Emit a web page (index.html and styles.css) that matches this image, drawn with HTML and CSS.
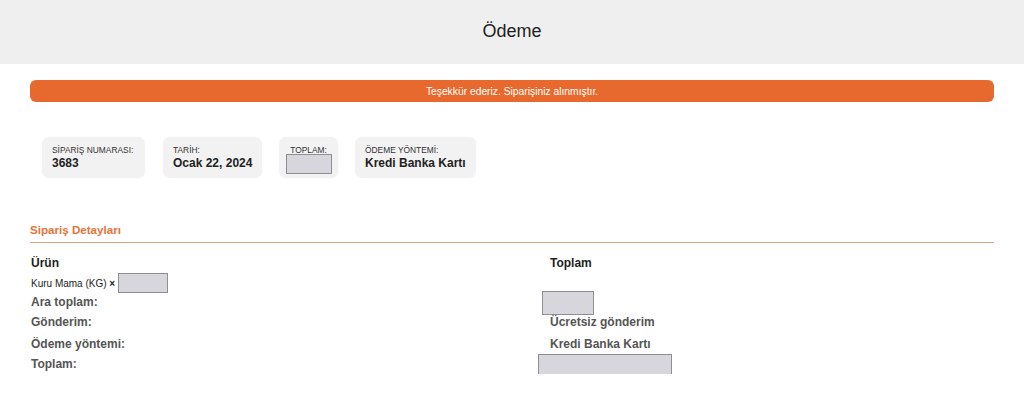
FILE: index.html
```html
<!DOCTYPE html>
<html lang="tr">
<head>
<meta charset="utf-8">
<title>Ödeme</title>
<link rel="stylesheet" href="styles.css">
</head>
<body>
<header class="page-header">
  <h1 class="page-title">Ödeme</h1>
</header>
<main class="content">
  <div class="notice">Teşekkür ederiz. Siparişiniz alınmıştır.</div>

  <ul class="overview">
    <li class="card">
      <span class="card-label">SİPARİŞ NUMARASI:</span>
      <strong class="card-value">3683</strong>
    </li>
    <li class="card">
      <span class="card-label">TARİH:</span>
      <strong class="card-value">Ocak 22, 2024</strong>
    </li>
    <li class="card card-center">
      <span class="card-label">TOPLAM:</span>
      <span class="redact redact-card"></span>
    </li>
    <li class="card">
      <span class="card-label">ÖDEME YÖNTEMİ:</span>
      <strong class="card-value">Kredi Banka Kartı</strong>
    </li>
  </ul>

  <section class="details">
    <h2 class="details-title">Sipariş Detayları</h2>
    <div class="table">
      <div class="row row-head">
        <div class="cell">Ürün</div>
        <div class="cell cell-right">Toplam</div>
      </div>
      <div class="row row-item">
        <div class="cell item-name">Kuru Mama (KG) <strong class="times">×</strong><span class="redact redact-qty"></span></div>
        <div class="cell cell-right"></div>
      </div>
      <div class="row row-sub">
        <div class="cell label">Ara toplam:</div>
        <div class="cell cell-right cell-top"><span class="redact redact-sub"></span></div>
      </div>
      <div class="row row-ship">
        <div class="cell label">Gönderim:</div>
        <div class="cell cell-right value">Ücretsiz gönderim</div>
      </div>
      <div class="row row-method">
        <div class="cell label">Ödeme yöntemi:</div>
        <div class="cell cell-right value">Kredi Banka Kartı</div>
      </div>
      <div class="row row-total">
        <div class="cell label">Toplam:</div>
        <div class="cell cell-right cell-top"><span class="redact redact-total"></span></div>
      </div>
    </div>
  </section>
</main>
</body>
</html>
```

FILE: styles.css
```css
* { box-sizing: border-box; }

html, body {
  margin: 0;
  padding: 0;
  background: #ffffff;
  font-family: "Liberation Sans", Arial, sans-serif;
  color: #222;
}

.page-header {
  background: #efefef;
  height: 64px;
  display: flex;
  align-items: center;
  justify-content: center;
}

.page-title {
  margin: 0;
  font-size: 18px;
  font-weight: normal;
  color: #1e1e1e;
  position: relative;
  top: -1px;
}

.content {
  padding: 16px 30px 0 30px;
}

.notice {
  height: 22px;
  background: #e8692d;
  border-radius: 6px;
  color: #fff;
  font-size: 10.3px;
  display: flex;
  align-items: center;
  justify-content: center;
}

.overview {
  list-style: none;
  margin: 35px 0 0 12px;
  padding: 0;
  display: flex;
  gap: 18px;
}

.card {
  background: #f2f2f2;
  border-radius: 7px;
  height: 41px;
  padding: 8px 10px 0 10px;
  display: flex;
  flex-direction: column;
  box-shadow: 0 0 2px rgba(0,0,0,0.04);
}

.card:nth-child(1) { width: 103px; }
.card:nth-child(2) { width: 99px; }
.card:nth-child(3) { width: 59px; margin-left: -1px; }
.card:nth-child(4) { width: 121px; margin-left: -1px; }

.card-center {
  align-items: center;
  padding-left: 6px;
  padding-right: 6px;
}

.card-label {
  font-size: 8.4px;
  line-height: 10px;
  color: #333;
  white-space: nowrap;
}

.card-value {
  font-size: 12px;
  line-height: 16px;
  font-weight: bold;
  color: #222;
  white-space: nowrap;
}

.redact {
  display: inline-block;
  background: #d6d6dc;
  border: 1px solid #8f8f93;
  vertical-align: middle;
}

.redact-card { width: 46px; height: 20px; margin-top: -1px; }

.details {
  margin-top: 45px;
}

.details-title {
  margin: 0;
  font-size: 11.6px;
  line-height: 14px;
  font-weight: bold;
  color: #e5733a;
  padding-bottom: 5px;
  border-bottom: 1px solid #d7a286;
}

.table {
  margin-top: 10px;
}

.row {
  display: grid;
  grid-template-columns: 508px 1fr;
  grid-template-rows: 100%;
  align-items: center;
  height: 21px;
}

.cell {
  padding-left: 1px;
}

.cell-right {
  padding-left: 12px;
}

.cell-top {
  align-self: start;
}

.row-head {
  height: 20px;
  font-size: 12px;
  font-weight: bold;
  color: #1e1e1e;
}

.row-item {
  height: 20px;
  font-size: 10px;
  color: #222;
}

.times {
  font-size: 10px;
  font-weight: bold;
}

.redact-qty {
  width: 50px;
  height: 20px;
  margin-left: 3px;
  vertical-align: -6px;
}

.label {
  font-size: 12px;
  font-weight: bold;
  color: #555;
}

.value {
  font-size: 12px;
  font-weight: bold;
  color: #555;
}

.row-sub { height: 18px; }
.row-ship { height: 22px; }
.row-method { height: 21px; }
.row-total { height: 20px; }

.redact-sub {
  display: block;
  width: 52px;
  height: 24px;
  margin: -2px 0 -6px -8px;
}

.redact-total {
  display: block;
  width: 134px;
  height: 25px;
  margin: 0 0 -6px -12px;
}
```
